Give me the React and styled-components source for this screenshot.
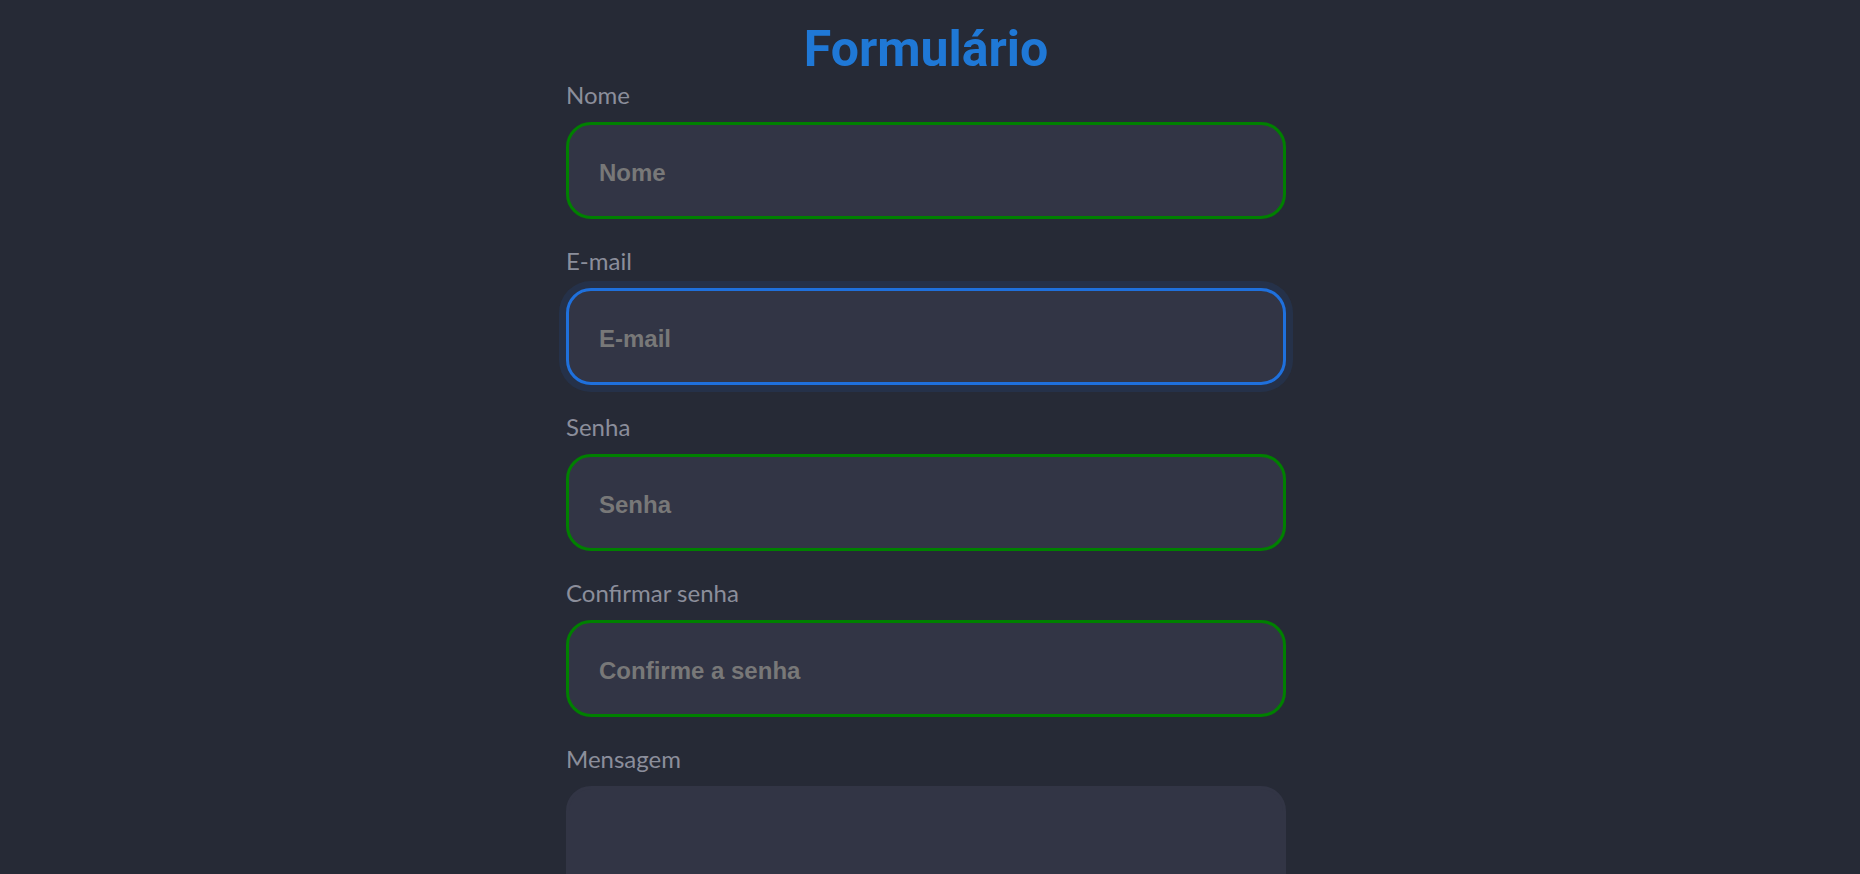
import React from "react";
import styled, { createGlobalStyle, css } from "styled-components";

const GlobalStyle = createGlobalStyle`
  html, body {
    margin: 0;
    padding: 0;
    background: #262a36;
  }
  body {
    font-family: "Lato", "Open Sans", sans-serif;
  }
  * { box-sizing: border-box; }
`;

const Page = styled.main`
  min-height: 100vh;
  padding: 19px 8px 40px 0;
  display: flex;
  flex-direction: column;
  align-items: center;
`;

const Title = styled.h1`
  margin: 0 0 1px;
  font-family: "Roboto", "Lato", sans-serif;
  font-size: 50px;
  font-weight: 700;
  line-height: 60px;
  color: #1f78d6;
  text-align: center;
`;

const Form = styled.form`
  width: 720px;
  display: flex;
  flex-direction: column;
`;

const Field = styled.div`
  display: flex;
  flex-direction: column;
  gap: 12px;
  margin-bottom: 27px;
`;

const Label = styled.label`
  display: block;
  font-family: "Lato", sans-serif;
  font-size: 24px;
  line-height: 30px;
  font-weight: 400;
  color: #8b8e9b;
`;

const fieldBase = css`
  width: 100%;
  border-radius: 25px;
  background: #323545;
  border: 3px solid transparent;
  outline: none;
  color: #d0d2da;
  font-family: "Liberation Sans", "Arial", sans-serif;
  font-size: 24px;
  font-weight: 700;

  &::placeholder {
    color: #787878;
    opacity: 1;
  }
`;

const stateStyles = {
  valid: css`
    border-color: #008000;
  `,
  focus: css`
    border-color: #1f70dc;
    box-shadow: 0 0 0 7px rgba(31, 111, 217, 0.12);
  `,
  plain: css`
    border-color: #323545;
  `,
};

const Input = styled.input`
  ${fieldBase}
  height: 97px;
  padding: 4px 30px 0;
  ${(p) => stateStyles[p.$state || "plain"]}
`;

const TextArea = styled.textarea`
  ${fieldBase}
  height: 180px;
  padding: 30px;
  resize: none;
  ${(p) => stateStyles[p.$state || "plain"]}
`;

const fields = [
  { id: "nome", label: "Nome", placeholder: "Nome", type: "text", state: "valid" },
  { id: "email", label: "E-mail", placeholder: "E-mail", type: "email", state: "focus" },
  { id: "senha", label: "Senha", placeholder: "Senha", type: "password", state: "valid" },
  { id: "confirmar", label: "Confirmar senha", placeholder: "Confirme a senha", type: "password", state: "valid" },
];

export default function App() {
  return (
    <>
      <GlobalStyle />
      <Page>
        <Title>Formulário</Title>
        <Form onSubmit={(e) => e.preventDefault()}>
          {fields.map((f) => (
            <Field key={f.id}>
              <Label htmlFor={f.id}>{f.label}</Label>
              <Input id={f.id} type={f.type} placeholder={f.placeholder} $state={f.state} />
            </Field>
          ))}
          <Field>
            <Label htmlFor="mensagem">Mensagem</Label>
            <TextArea id="mensagem" $state="plain" />
          </Field>
        </Form>
      </Page>
    </>
  );
}
